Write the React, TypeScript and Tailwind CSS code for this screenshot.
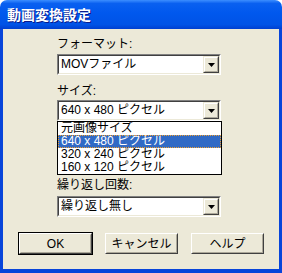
import { useState } from 'react';

const font = 'font-["Liberation_Sans","Noto_Sans_CJK_JP",sans-serif]';

function DropButton() {
  return (
    <div className="w-[16px] h-[17px] border border-t-[#ECE9D8] border-l-[#ECE9D8] border-r-[#404040] border-b-[#404040]">
      <div className="w-full h-full bg-[#ECE9D8] border border-t-white border-l-white border-r-[#ACA899] border-b-[#ACA899] flex items-center justify-center">
        <svg width="7" height="4" viewBox="0 0 7 4">
          <path d="M0 0h7L3.5 4z" fill="#000" />
        </svg>
      </div>
    </div>
  );
}

function Combo({ value }: { value: string }) {
  return (
    <div className="w-[164px] h-[21px] border border-t-[#808080] border-l-[#808080] border-r-white border-b-white">
      <div className="w-full h-full bg-white border border-t-[#404040] border-l-[#404040] border-r-[#ECE9D8] border-b-[#ECE9D8] flex items-center justify-between pl-[2px]">
        <span className="leading-[15px] text-black">{value}</span>
        <DropButton />
      </div>
    </div>
  );
}

function Button({ label, primary }: { label: string; primary?: boolean }) {
  return (
    <button
      type="button"
      className={`w-[75px] h-[23px] ${primary ? 'border border-black' : 'border border-transparent'}`}
    >
      <div className="w-full h-full border border-t-white border-l-white border-r-[#404040] border-b-[#404040]">
        <div className="w-full h-full bg-[#ECE9D8] border border-t-[#ECE9D8] border-l-[#ECE9D8] border-r-[#ACA899] border-b-[#ACA899] flex items-center justify-center text-black leading-[14px]">
          {label}
        </div>
      </div>
    </button>
  );
}

export default function App() {
  const [selected, setSelected] = useState(1);
  const sizes = ['元画像サイズ', '640 x 480 ピクセル', '320 x 240 ピクセル', '160 x 120 ピクセル'];

  return (
    <div className={`w-[282px] h-[273px] flex flex-col bg-white text-[12px] ${font}`}>
      <div className="h-[29px] shrink-0 rounded-t-[7px] bg-[linear-gradient(to_bottom,#3C8EFF_0%,#0A60F0_12%,#0058EE_45%,#0053E6_85%,#003FD0_100%)] flex items-center pl-[7px]">
        <span className="text-white font-bold text-[14px] leading-[16px] [text-shadow:1px_1px_0_#0A1A8A]">
          動画変換設定
        </span>
      </div>
      <div className="flex-1 bg-[#ECE9D8] border-x-[3px] border-b-[4px] border-[#0845DA] flex flex-col">
        <div className="pl-[54px] pt-[8px] flex flex-col">
          <div className="leading-[14px] h-[14px] text-black">フォーマット:</div>
          <div className="mt-[3px]">
            <Combo value="MOVファイル" />
          </div>
          <div className="mt-[9px] leading-[14px] h-[14px] text-black">サイズ:</div>
          <div className="mt-[2px]">
            <Combo value={sizes[selected]} />
          </div>
          <ul className="w-[165px] border border-black bg-white">
            {sizes.map((s, i) => (
              <li
                key={s}
                onClick={() => setSelected(i)}
                className={`h-[13px] leading-[13px] pl-[3px] ${
                  i === selected
                    ? 'bg-[#316AC5] text-white outline-1 outline-dotted outline-[#F0A030] -outline-offset-1'
                    : 'text-black'
                }`}
              >
                {s}
              </li>
            ))}
          </ul>
          <div className="mt-[3px] leading-[14px] h-[14px] text-black">繰り返し回数:</div>
          <div className="mt-[4px]">
            <Combo value="繰り返し無し" />
          </div>
        </div>
        <div className="flex pl-[15px] pt-[15px] gap-[11px]">
          <Button label="OK" primary />
          <Button label="キャンセル" />
          <Button label="ヘルプ" />
        </div>
      </div>
    </div>
  );
}
